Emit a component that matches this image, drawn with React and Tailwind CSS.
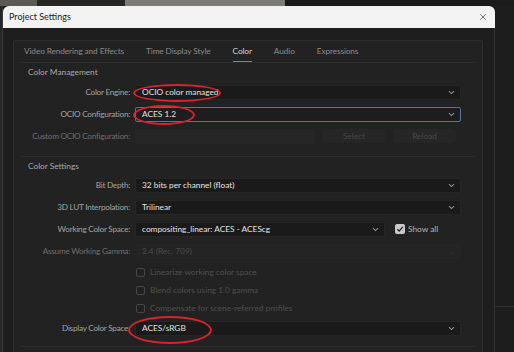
import { X } from "lucide-react";

const Chevron = () => (
  <svg width="7" height="5" viewBox="0 0 7 5" className="shrink-0">
    <path d="M1 1.2 L3.5 3.6 L6 1.2" fill="none" stroke="#8f8f8f" strokeWidth="1.1" />
  </svg>
);

function Dropdown({ value, width = "w-[326px]", focused, dim, ring }) {
  return (
    <div
      className={`relative ${width} h-[15px] flex items-center justify-between pl-[6px] pr-[5px] rounded-[2px] border text-[8.3px] ${
        focused ? "border-[#56759a] bg-[#1d1d1f]" : dim ? "border-[#252525] bg-[#242424]" : "border-[#262626] bg-[#1a1a1a]"
      }`}
    >
      <span className={dim ? "text-[#4a4a4a]" : "text-[#e2e2e2]"}>{value}</span>
      {dim ? <span className="text-[#333] text-[7px]">⌄</span> : <Chevron />}
      {ring}
    </div>
  );
}

function Row({ label, dimLabel, children }) {
  return (
    <div className="h-[22px] flex items-center">
      <div
        className={`w-[114px] pr-[5px] text-right whitespace-nowrap text-[8.2px] tracking-[-0.25px] ${
          dimLabel ? "text-[#6e6e6e]" : "text-[#a2a2a2]"
        }`}
      >
        {label}
      </div>
      {children}
    </div>
  );
}

function CheckRow({ text }) {
  return (
    <div className="h-[18px] flex items-center pl-[115px] gap-[5px]">
      <div className="w-[9px] h-[9px] rounded-[2px] border border-[#474747]" />
      <span className="text-[#4e4e4e] text-[8.3px]">{text}</span>
    </div>
  );
}

const Ring = ({ cls }) => <div className={`absolute border-2 border-[#d8232a] rounded-[50%] ${cls}`} />;

export default function App() {
  return (
    <div className="w-[514px] h-[352px] bg-[#1c1c1c] overflow-hidden flex flex-col text-[8.3px] font-['Lato',sans-serif]">
      <div className="h-[6px] flex shrink-0">
        <div className="w-[37px] bg-[#5c5a55]" />
        <div className="w-[88px] bg-[#262624]" />
        <div className="w-[160px] bg-[#7d7c78]" />
        <div className="flex-1 bg-[#1b1b1b]" />
      </div>
      <div className="flex flex-1 min-h-0">
        <div className="w-[3px] bg-[#262626] border-r border-[#3a3a3a]" />
        <div className="w-[492px] flex flex-col">
          <div className="h-[22px] bg-[#f3f3f3] rounded-t-[6px] flex items-center justify-between pl-[6px] pr-[7px] shrink-0">
            <span className="text-[9px] text-[#1b1b1b]">Project Settings</span>
            <X size={10} strokeWidth={1.6} color="#333" />
          </div>
          <div className="flex-1 bg-[#1e1e1e] pl-[10px] pr-[11px] pt-[12px] border-r border-[#333]">
            <div className="h-full bg-[#222222] border border-[#2d2d2d] border-b-0 rounded-t-[2px] px-[7px]">
              <div className="h-[20px] flex items-center pl-[3px] gap-[22px] text-[#8a8a8a] whitespace-nowrap text-[8.3px] tracking-[-0.12px]">
                <span>Video Rendering and Effects</span>
                <span>Time Display Style</span>
                <span className="relative text-[#d2d2d2]">
                  Color
                  <span className="absolute left-0 right-0 -bottom-[5px] h-[1.5px] bg-[#4d8fd6]" />
                </span>
                <span>Audio</span>
                <span>Expressions</span>
              </div>

              <div className="border-t border-[#2c2c2c] mt-[1px] pb-[9px]">
                <div className="h-[18px] flex items-center pl-[7px] text-[#a8a8a8]">Color Management</div>
                <Row label="Color Engine:">
                  <Dropdown value="OCIO color managed" ring={<Ring cls="-left-[3px] -top-[2px] w-[88px] h-[18px]" />} />
                </Row>
                <Row label="OCIO Configuration:">
                  <Dropdown value="ACES 1.2" focused ring={<Ring cls="-left-[3px] -top-[3px] w-[62px] h-[20px]" />} />
                </Row>
                <Row label="Custom OCIO Configuration:" dimLabel>
                  <div className="flex items-center gap-[8px]">
                    <div className="w-[180px] h-[15px] bg-[#262626] rounded-[2px]" />
                    <div className="w-[62px] h-[14px] bg-[#262626] rounded-[3px] flex items-center justify-center text-[#494949]">Select</div>
                    <div className="w-[63px] h-[14px] bg-[#262626] rounded-[3px] flex items-center justify-center text-[#494949]">Reload</div>
                  </div>
                </Row>
              </div>

              <div className="border-t border-[#2c2c2c] border-b pb-[7px]">
                <div className="h-[16px] mt-[1px] flex items-center pl-[7px] text-[#a8a8a8]">Color Settings</div>
                <Row label="Bit Depth:">
                  <Dropdown value="32 bits per channel (float)" />
                </Row>
                <Row label="3D LUT Interpolation:">
                  <Dropdown value="Trilinear" />
                </Row>
                <Row label="Working Color Space:">
                  <Dropdown value="compositing_linear: ACES - ACEScg" width="w-[250px]" />
                  <div className="ml-[10px] w-[10px] h-[10px] rounded-[2px] bg-[#c9c9c9] flex items-center justify-center">
                    <svg width="8" height="8" viewBox="0 0 8 8">
                      <path d="M1.3 4.2 L3.2 6 L6.8 1.8" fill="none" stroke="#2a2a2a" strokeWidth="1.3" />
                    </svg>
                  </div>
                  <span className="ml-[3px] text-[#b4b4b4]">Show all</span>
                </Row>
                <Row label="Assume Working Gamma:" dimLabel>
                  <Dropdown value="2.4 (Rec. 709)" dim />
                </Row>
                <div className="pt-[1px]">
                  <CheckRow text="Linearize working color space" />
                  <CheckRow text="Blend colors using 1.0 gamma" />
                  <CheckRow text="Compensate for scene-referred profiles" />
                </div>
                <Row label="Display Color Space:">
                  <Dropdown value="ACES/sRGB" ring={<Ring cls="-left-[8px] -top-[6px] w-[84px] h-[28px]" />} />
                </Row>
              </div>
            </div>
          </div>
        </div>
        <div className="flex-1 bg-[#1d1d1d] flex flex-col">
          <div className="h-[300px]" />
          <div className="h-[1px] bg-[#2e2e2e]" />
        </div>
      </div>
    </div>
  );
}
